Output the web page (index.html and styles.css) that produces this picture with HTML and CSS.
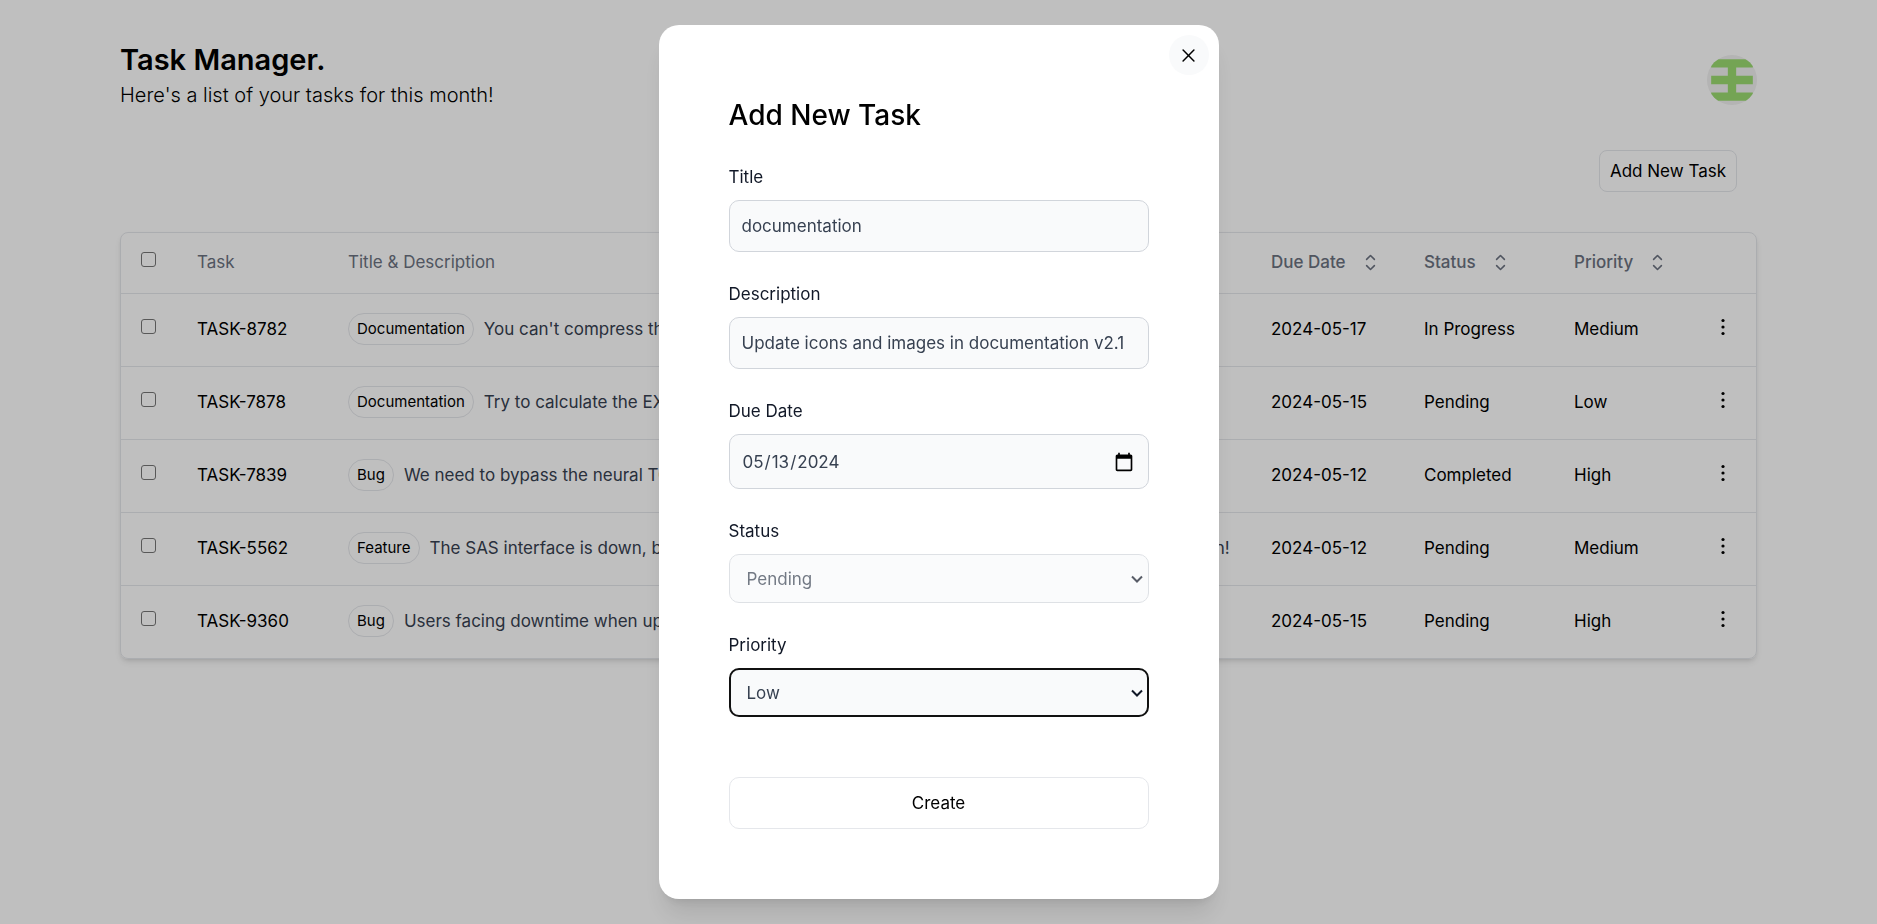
FILE: index.html
```html
<!DOCTYPE html>
<html lang="en">
<head>
<meta charset="utf-8">
<title>Task Manager</title>
<link rel="stylesheet" href="styles.css">
</head>
<body>
<svg class="sprite" aria-hidden="true">
  <symbol id="sort" viewBox="0 0 24 24"><path d="M8.25 15 12 18.75 15.75 15M8.25 9 12 5.25 15.75 9" fill="none" stroke="currentColor" stroke-width="1.5" stroke-linecap="round" stroke-linejoin="round"/></symbol>
  <symbol id="dots" viewBox="0 0 24 24"><circle cx="12" cy="5.5" r="1.6"/><circle cx="12" cy="12" r="1.6"/><circle cx="12" cy="18.5" r="1.6"/></symbol>
</svg>
<main class="page">
  <header class="header">
    <div>
      <h1 class="brand">Task Manager.</h1>
      <p class="tagline">Here's a list of your tasks for this month!</p>
    </div>
    <svg class="avatar" viewBox="0 0 420 420" role="img" aria-label="Profile"><rect width="420" height="420" fill="#f0f0f0"/><path fill="#9bdb71" d="M35 35h350v70H245v70h140v70H245v70h140v70H35v-70h140v-70H35v-70h140v-70H35z"/></svg>
  </header>
  <div class="toolbar"><button class="add" type="button">Add New Task</button></div>
  <div class="card">
    <table class="tasks">
      <colgroup><col class="col-check"><col class="col-task"><col><col class="col-due"><col class="col-status"><col class="col-priority"><col class="col-more"></colgroup>
      <thead>
        <tr>
          <th class="check"><input type="checkbox" aria-label="Select all"></th>
          <th>Task</th>
          <th>Title &amp; Description</th>
          <th><button class="sort" type="button">Due Date<svg><use href="#sort"/></svg></button></th>
          <th><button class="sort" type="button">Status<svg><use href="#sort"/></svg></button></th>
          <th><button class="sort" type="button">Priority<svg><use href="#sort"/></svg></button></th>
          <th></th>
        </tr>
      </thead>
      <tbody>
        <tr>
          <td class="check"><input type="checkbox" aria-label="Select TASK-8782"></td>
          <td>TASK-8782</td>
          <td><div class="summary"><span class="badge">Documentation</span><span>You can't compress the program without quantifying the open-source SSD pixel!</span></div></td>
          <td>2024-05-17</td><td>In Progress</td><td>Medium</td>
          <td class="more"><button type="button" aria-label="Actions"><svg><use href="#dots"/></svg></button></td>
        </tr>
        <tr>
          <td class="check"><input type="checkbox" aria-label="Select TASK-7878"></td>
          <td>TASK-7878</td>
          <td><div class="summary"><span class="badge">Documentation</span><span>Try to calculate the EXE feed, maybe it will index the multi-byte pixel!</span></div></td>
          <td>2024-05-15</td><td>Pending</td><td>Low</td>
          <td class="more"><button type="button" aria-label="Actions"><svg><use href="#dots"/></svg></button></td>
        </tr>
        <tr>
          <td class="check"><input type="checkbox" aria-label="Select TASK-7839"></td>
          <td>TASK-7839</td>
          <td><div class="summary"><span class="badge">Bug</span><span>We need to bypass the neural TCP card!</span></div></td>
          <td>2024-05-12</td><td>Completed</td><td>High</td>
          <td class="more"><button type="button" aria-label="Actions"><svg><use href="#dots"/></svg></button></td>
        </tr>
        <tr>
          <td class="check"><input type="checkbox" aria-label="Select TASK-5562"></td>
          <td>TASK-5562</td>
          <td><div class="summary"><span class="badge">Feature</span><span>The SAS interface is down, bypass the open-source pixels, so we may back up the PNG bandwidth!</span></div></td>
          <td>2024-05-12</td><td>Pending</td><td>Medium</td>
          <td class="more"><button type="button" aria-label="Actions"><svg><use href="#dots"/></svg></button></td>
        </tr>
        <tr>
          <td class="check"><input type="checkbox" aria-label="Select TASK-9360"></td>
          <td>TASK-9360</td>
          <td><div class="summary"><span class="badge">Bug</span><span>Users facing downtime when uploading files</span></div></td>
          <td>2024-05-15</td><td>Pending</td><td>High</td>
          <td class="more"><button type="button" aria-label="Actions"><svg><use href="#dots"/></svg></button></td>
        </tr>
      </tbody>
    </table>
  </div>
</main>
<div class="overlay">
  <form class="modal" role="dialog" aria-labelledby="modal-title">
    <button class="close" type="button" aria-label="Close"><svg viewBox="0 0 12 12"><path d="M1 1l10 10M11 1L1 11" fill="none" stroke="currentColor" stroke-width="1.4" stroke-linecap="round"/></svg></button>
    <h2 class="modal-title" id="modal-title">Add New Task</h2>
    <div class="field"><label for="title">Title</label><input id="title" type="text" value="documentation"></div>
    <div class="field"><label for="description">Description</label><input id="description" type="text" value="Update icons and images in documentation v2.1"></div>
    <div class="field"><label for="due">Due Date</label><input class="date" id="due" type="date" value="2024-05-13"></div>
    <div class="field"><label for="status">Status</label><select id="status" disabled><option>Pending</option></select></div>
    <div class="field"><label for="priority">Priority</label><select class="focused" id="priority"><option>Low</option><option>Medium</option><option>High</option></select></div>
    <button class="create" type="submit">Create</button>
  </form>
</div>
</body>
</html>
```
FILE: styles.css
```css
* { box-sizing: border-box; }
body { margin: 0; background: #fff; color: #000; font: 400 17px/24px Inter, "Liberation Sans", sans-serif; }
button, input, select { font: inherit; color: inherit; }
button { background: none; border: 0; padding: 0; }
.sprite { display: none; }

.page { padding: 40px 120px; }
.header { display: flex; justify-content: space-between; height: 80px; }
.brand { margin: 0; font-size: 29px; line-height: 40px; font-weight: 600; }
.tagline { margin: 0; font-size: 20px; line-height: 30px; font-weight: 300; }
.avatar { width: 50px; height: 50px; border-radius: 50%; align-self: center; }
.toolbar { display: flex; justify-content: flex-end; padding: 30px 20px 40px; }
.add { height: 42px; padding: 0 10px; border: 1px solid #e5e7eb; border-radius: 8px; }

.card { border: 1px solid #e5e7eb; border-radius: 8px; box-shadow: 0 4px 6px -1px rgba(0, 0, 0, .1), 0 2px 4px -2px rgba(0, 0, 0, .1); }
.tasks { width: 100%; table-layout: fixed; border-collapse: collapse; }
.col-check { width: 76px; }
.col-task { width: 151px; }
.col-due { width: 153px; }
.col-status { width: 150px; }
.col-priority { width: 125px; }
.col-more { width: 57px; }
.tasks th, .tasks td { padding: 0 0 1px; height: 73px; text-align: left; white-space: nowrap; }
.tasks th { height: 60px; color: #6b7280; font-weight: 400; }
.tasks tbody tr { border-top: 1px solid #e5e7eb; }
.tasks .check { padding: 0 0 6px 20px; }
.check input { appearance: none; display: block; width: 15px; height: 15px; margin: 0; border: 1px solid #767676; border-radius: 3px; background: #fff; }
.sort { display: flex; align-items: center; gap: 12px; font-weight: 500; }
.sort svg { width: 25px; height: 25px; }
.summary { display: flex; align-items: center; gap: 10px; color: #374151; }
.badge { border: 1px solid #e5e7eb; border-radius: 16px; padding: 3px 8px; color: #000; font-size: 15px; }
.tasks .more { padding: 0 21px 6px 0; }
.more button { display: block; margin-left: auto; }
.more svg { display: block; width: 24px; height: 24px; }

.overlay { position: fixed; inset: 0; display: flex; align-items: center; justify-content: center; background: rgba(0, 0, 0, .25); }
.modal { position: relative; display: flex; flex-direction: column; gap: 28px; width: 560px; max-width: 100%; padding: 70px; border-radius: 20px; background: #fff; box-shadow: 0 20px 25px -5px rgba(0, 0, 0, .1), 0 8px 10px -6px rgba(0, 0, 0, .1); }
.close { position: absolute; top: 10px; right: 10px; display: flex; align-items: center; justify-content: center; width: 40px; height: 40px; border-radius: 50%; background: #f9fafb; }
.close svg { width: 13px; height: 13px; }
.modal-title { margin: 0; font-size: 28px; line-height: 40px; font-weight: 500; }
.field { display: flex; flex-direction: column; gap: 9px; }
.field label { line-height: 28px; color: #111827; }
.field input, .field select { width: 100%; height: 52px; padding: 0 12px; border: 1px solid #d1d5db; border-radius: 10px; background: #f9fafb; color: #374151; }
.field .date { height: 55px; padding-right: 14px; }
.date::-webkit-calendar-picker-indicator { width: 20px; height: 20px; padding: 0; background-size: 20px 20px; }
.field select { appearance: none; height: 49px; padding: 0 17px; background: #f9fafb url("data:image/svg+xml,%3Csvg xmlns='http://www.w3.org/2000/svg' viewBox='0 0 12 8'%3E%3Cpath d='M1 1.5l5 5 5-5' fill='none' stroke='%23111827' stroke-width='2'/%3E%3C/svg%3E") no-repeat right 5px center / 12px 8px; }
.field select:disabled { opacity: .7; }
.field .focused { padding: 0 16px; border: 2px solid #111; background-position: right 4px center; }
.create { height: 52px; margin-top: 32px; border: 1px solid #e5e7eb; border-radius: 10px; }
```
